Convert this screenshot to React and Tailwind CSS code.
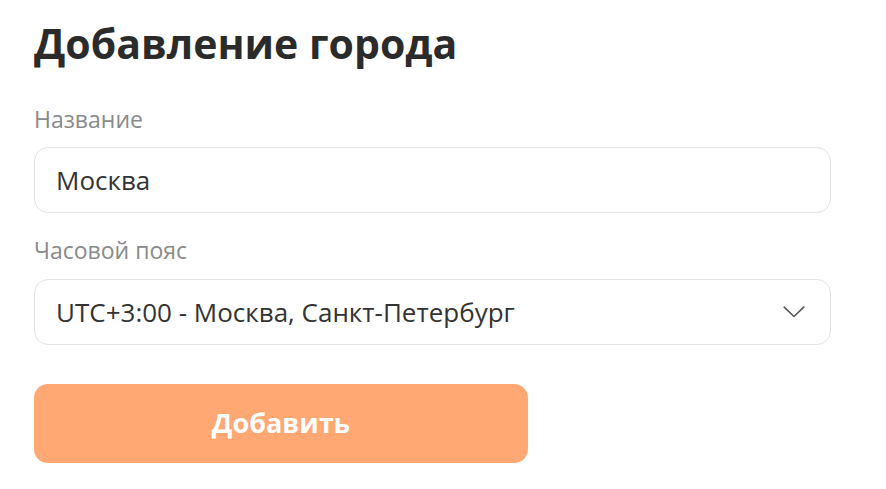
import React, { useState } from 'react';

export default function App() {
  const [name, setName] = useState('Москва');
  const [zone, setZone] = useState('msk');

  return (
    <div className="min-h-screen bg-white font-['Open_Sans',sans-serif] text-[#333333]">
      <div className="w-[797px] ml-[34px] pt-[19px]">
        <h1 className="text-[41px] leading-[48px] font-bold text-[#2b2b2b]">Добавление города</h1>

        <label className="block mt-[38px] text-[23px] leading-[28px] text-[#8a8a8a]">Название</label>
        <input
          value={name}
          onChange={(e) => setName(e.target.value)}
          className="mt-[14px] block w-full h-[66px] px-[21px] rounded-[14px] border border-[#e2e2e2] text-[26px] text-[#333333] outline-none"
        />

        <label className="block mt-[23px] text-[23px] leading-[28px] text-[#8a8a8a]">Часовой пояс</label>
        <div className="relative mt-[15px]">
          <select
            value={zone}
            onChange={(e) => setZone(e.target.value)}
            className="block w-full h-[66px] pl-[21px] pr-[60px] rounded-[14px] border border-[#e2e2e2] bg-white text-[26px] text-[#333333] outline-none appearance-none"
          >
            <option value="msk">UTC+3:00 - Москва, Санкт-Петербург</option>
          </select>
          <svg
            className="absolute right-[26px] top-1/2 -translate-y-1/2 pointer-events-none"
            width="22"
            height="12"
            viewBox="0 0 22 12"
            fill="none"
          >
            <polyline points="1.2,1.2 11,10.5 20.8,1.2" stroke="#555555" strokeWidth="1.6" strokeLinecap="round" strokeLinejoin="round" />
          </svg>
        </div>

        <button className="mt-[39px] w-[494px] h-[79px] rounded-[14px] bg-[#ffa873] text-white text-[27px] font-bold">
          Добавить
        </button>
      </div>
    </div>
  );
}
